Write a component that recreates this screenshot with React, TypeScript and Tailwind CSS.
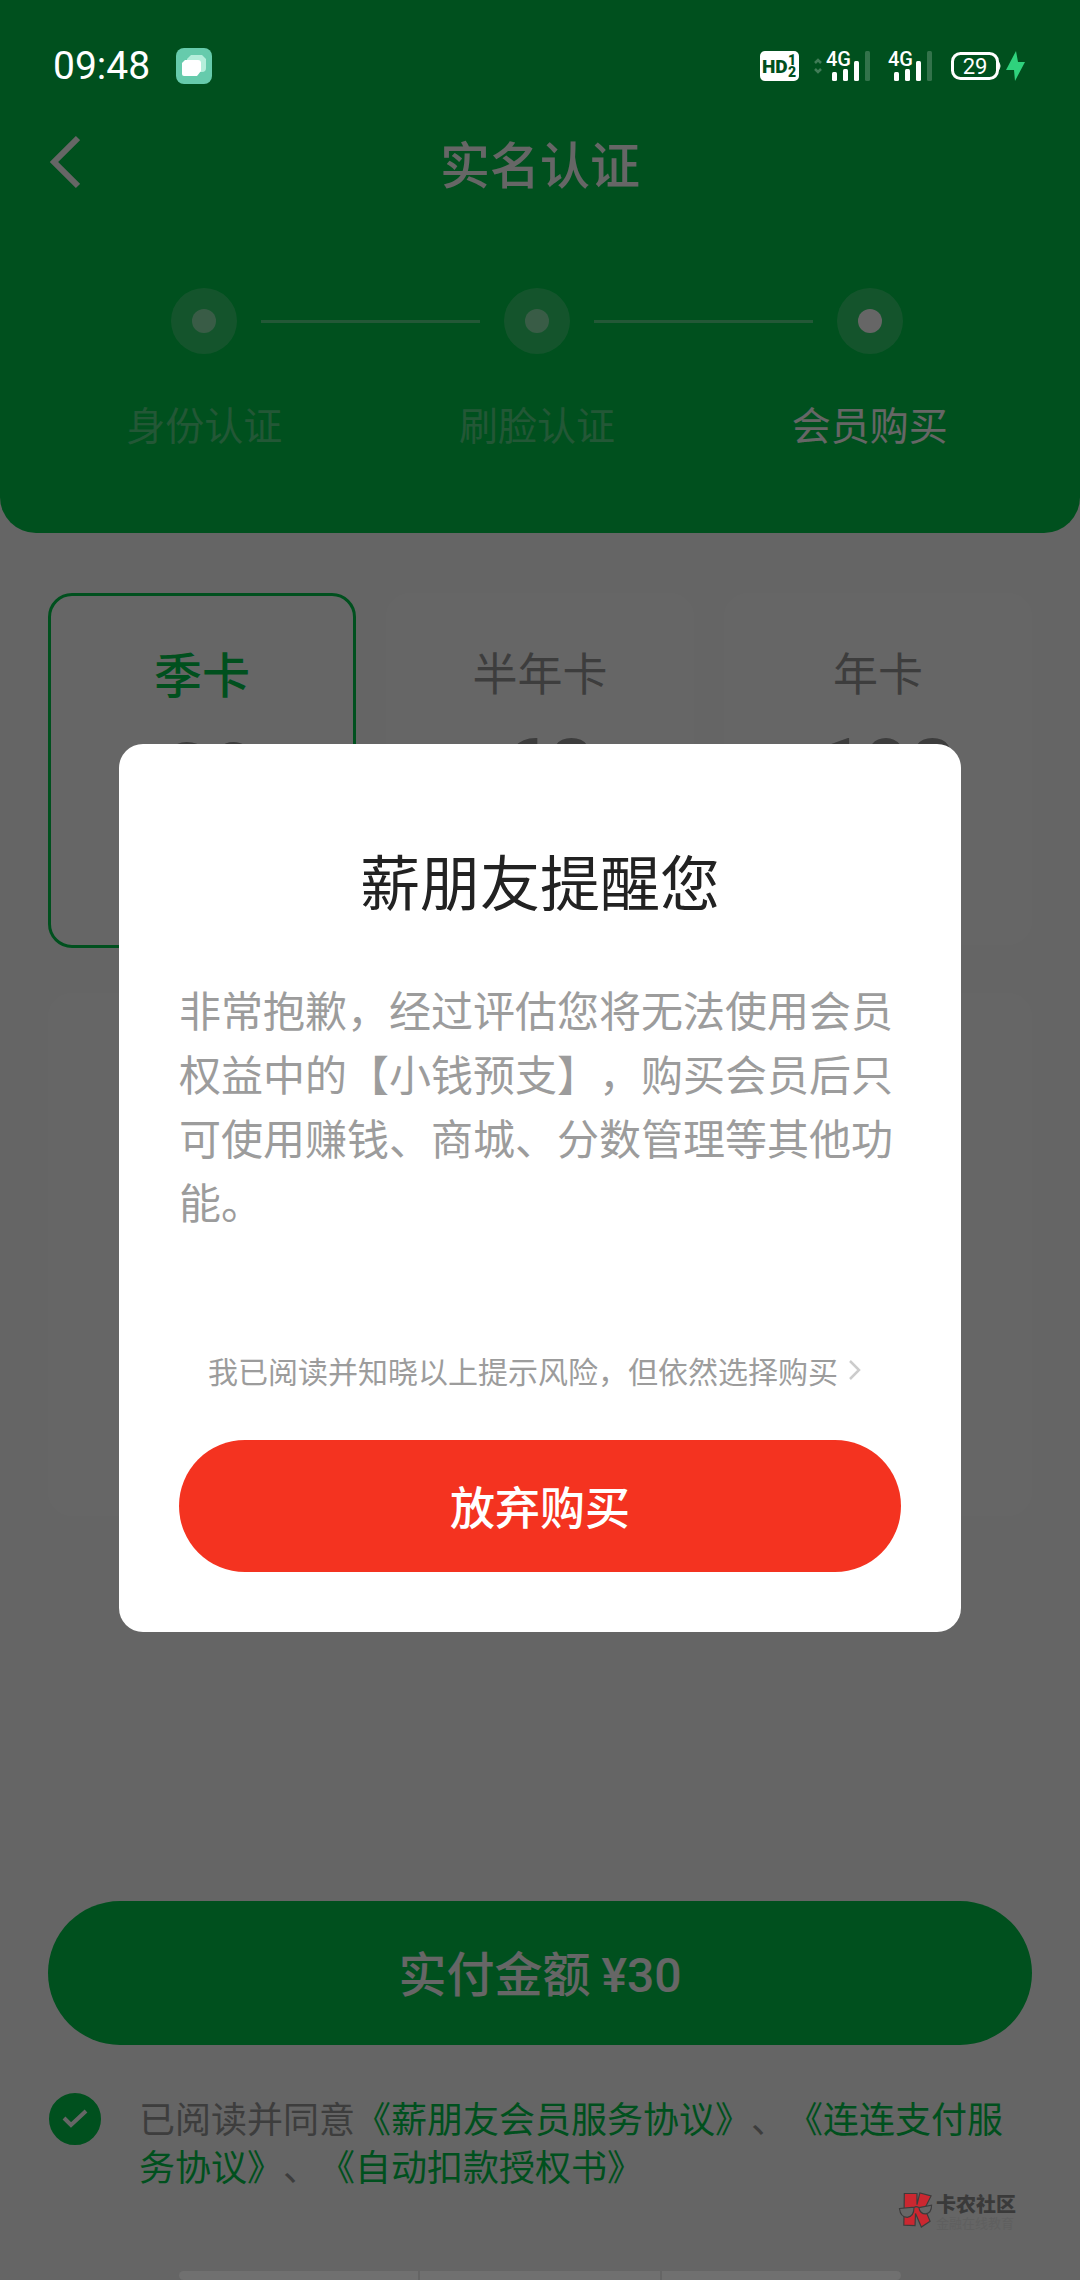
import { useState } from "react"

const steps = [
    { label: "身份认证", active: false },
    { label: "刷脸认证", active: false },
    { label: "会员购买", active: true },
]

const plans = [
    { id: "season", name: "季卡", price: 30 },
    { id: "half", name: "半年卡", price: 68 },
    { id: "year", name: "年卡", price: 198 },
]

function Signal() {
    return (
        <svg className="h-[30px] w-[46px] overflow-visible" viewBox="0 0 46 30" fill="#fff">
            <text x="0" y="15" fontSize="20" fontWeight="500" fontFamily="Roboto, sans-serif">4G</text>
            <rect x="6" y="21" width="5" height="9" rx="1.5" />
            <rect x="17" y="18" width="5" height="12" rx="1.5" />
            <rect x="28" y="10" width="5" height="20" rx="1.5" />
            <rect x="39" y="0" width="5" height="30" rx="1.5" opacity="0.2" />
        </svg>
    )
}

function StatusBar() {
    return (
        <div className="relative z-20 flex h-24 items-end justify-between pr-[54px] pl-[53px]">
            <div className="flex items-center gap-[26px] pb-2">
                <span className="font-[Roboto] text-[39px] leading-[44px] text-white">09:48</span>
                <svg className="h-9 w-9" viewBox="0 0 36 36">
                    <rect width="36" height="36" rx="8" fill="#66cbac" />
                    <path d="M15 7h11l4 4v9a4 4 0 0 1-4 4H11V11z" fill="#b5eedb" />
                    <path d="M9 12h13a3 3 0 0 1 3 3v8l-4 5H8a2 2 0 0 1-2-2V15z" fill="#fff" />
                </svg>
            </div>
            <div className="flex items-center pb-[15px]">
                <svg className="h-[30px] w-10" viewBox="0 0 40 30" fontFamily="Roboto, sans-serif" fontWeight="900" fill="#00501e">
                    <rect width="39" height="30" rx="5" fill="#fff" />
                    <text x="2" y="22" fontSize="19">HD</text>
                    <text x="28" y="14" fontSize="14">1</text>
                    <text x="28" y="26" fontSize="14">2</text>
                </svg>
                <svg className="ml-[14px] h-4 w-2" viewBox="0 0 8 16" fill="none" stroke="#fff" strokeWidth="2.500" opacity="0.25">
                    <path d="M1 5l3-3 3 3M1 11l3 3 3-3" />
                </svg>
                <div className="ml-1">
                    <Signal />
                </div>
                <div className="ml-4">
                    <Signal />
                </div>
                <svg className="ml-4 h-[30px] w-[76px]" viewBox="0 0 76 30">
                    <rect x="2.500" y="2.500" width="45" height="25" rx="8" fill="none" stroke="#fff" strokeWidth="3" />
                    <path d="M48 10q4 5 0 10z" fill="#fff" stroke="#fff" />
                    <text x="25" y="23" textAnchor="middle" fontSize="22" fontFamily="Roboto, sans-serif" fill="#fff">29</text>
                    <path d="M66 0L56 19h8l1 11 10-19h-7z" fill="#2fd27d" />
                </svg>
            </div>
        </div>
    )
}

function Header() {
    return (
        <header className="rounded-b-[36px] bg-[#00c84b] pb-[78px]">
            <StatusBar />
            <div className="grid h-[132px] grid-cols-3 items-center px-12">
                <button type="button" aria-label="返回" className="w-10">
                    <svg className="h-14 w-8" viewBox="0 0 32 56" fill="none" stroke="#fff" strokeWidth="6">
                        <path d="M30 4L6 28l24 24" />
                    </svg>
                </button>
                <h1 className="text-center text-[50px] font-medium text-white">实名认证</h1>
            </div>
            <div className="flex items-center gap-6 pt-[60px] pr-[177px] pl-[171px]">
                {steps.map((step, i) => (
                    <div key={step.label} className={i > 0 ? "flex flex-1 items-center gap-6" : "flex items-center"}>
                        {i > 0 && <div className="h-[3px] flex-1 bg-white/35" />}
                        <div className="flex h-[66px] w-[66px] items-center justify-center rounded-full bg-white/20">
                            <div className={step.active ? "h-6 w-6 rounded-full bg-white" : "h-6 w-6 rounded-full bg-white/45"} />
                        </div>
                    </div>
                ))}
            </div>
            <div className="mt-[37px] grid grid-cols-3 pr-[44px] pl-[38px] text-center text-[39px] leading-[64px]">
                {steps.map((step) => (
                    <p key={step.label} className={step.active ? "text-white" : "text-white/35"}>{step.label}</p>
                ))}
            </div>
        </header>
    )
}

function Plans() {
    const [selected, setSelected] = useState("season")

    return (
        <div className="grid grid-cols-3 gap-[30px]">
            {plans.map((plan) => (
                <button
                    key={plan.id}
                    type="button"
                    onClick={() => setSelected(plan.id)}
                    className={
                        plan.id === selected
                            ? "flex min-h-[355px] flex-col items-center gap-7 rounded-3xl border-3 border-[#00c84b] bg-white pt-11"
                            : "flex min-h-[352px] flex-col items-center gap-6 self-start rounded-3xl border-3 border-white bg-white pt-11"
                    }
                >
                    <span className={plan.id === selected ? "text-[48px] leading-[64px] font-medium text-[#00c84b]" : "text-[45px] leading-[64px] text-[#999]"}>
                        {plan.name}
                    </span>
                    <span className="font-[Roboto] text-[80px] leading-[80px] font-bold text-[#999]">
                        <span className="text-[32px]">¥</span>
                        {plan.price}
                    </span>
                </button>
            ))}
        </div>
    )
}

function Agreement() {
    const [agreed, setAgreed] = useState(true)

    return (
        <div className="mt-12 flex items-start gap-[38px]">
            <label className="grid h-[52px] w-[53px] shrink-0 place-items-center">
                <input
                    type="checkbox"
                    aria-label="已阅读并同意"
                    checked={agreed}
                    onChange={(e) => setAgreed(e.target.checked)}
                    className="col-start-1 row-start-1 h-[52px] w-[52px] appearance-none rounded-full border-2 border-[#00c84b] checked:bg-[#00c84b]"
                />
                {agreed && (
                    <svg className="pointer-events-none col-start-1 row-start-1 h-6 w-7" viewBox="0 0 28 24" fill="none" stroke="#fff" strokeWidth="4">
                        <path d="M3 11l7 7L25 4" />
                    </svg>
                )}
            </label>
            <p className="text-[36px] leading-[48px] text-[#999] [text-spacing-trim:space-all]">
                已阅读并同意<a href="#member" className="text-[#00c84b]">《薪朋友会员服务协议》</a>、<a href="#lianlian" className="text-[#00c84b]">《连连支付服务协议》</a>、<a href="#deduct" className="text-[#00c84b]">《自动扣款授权书》</a>
            </p>
        </div>
    )
}

function RiskDialog() {
    return (
        <div className="absolute inset-0 z-10 flex items-center justify-center bg-black/60 px-[119px] pt-24">
            <div role="dialog" aria-labelledby="risk-title" className="w-full rounded-3xl bg-white px-[60px] pt-24 pb-[60px]">
                <h2 id="risk-title" className="text-center text-[60px] leading-[80px] text-[#222]">薪朋友提醒您</h2>
                <p className="mt-[57px] text-[42px] leading-[64px] text-[#9c9c9c] [text-spacing-trim:space-all]">
                    非常抱歉，经过评估您将无法使用会员权益中的【小钱预支】，购买会员后只可使用赚钱、商城、分数管理等其他功能。
                </p>
                <button type="button" className="mt-[113px] flex w-full items-center justify-center gap-2 text-[30px] leading-[48px] text-[#9c9c9c]">
                    我已阅读并知晓以上提示风险，但依然选择购买
                    <svg className="h-[26px] w-[26px]" viewBox="0 0 26 26" fill="none" stroke="#ccc" strokeWidth="2.500">
                        <path d="M4 4l9 9-9 9" />
                    </svg>
                </button>
                <button type="button" className="mt-[46px] h-[132px] w-full rounded-full bg-[#f43320] text-[45px] font-medium text-white">
                    放弃购买
                </button>
            </div>
        </div>
    )
}

function Watermark() {
    return (
        <div className="absolute right-16 bottom-[50px] z-20 flex items-start gap-[2px]">
            <svg className="h-9 w-9" viewBox="0 0 36 37" stroke="#3c3c3c" strokeWidth="1.200">
                <path d="M6 1.500H19V13L22 1l11.500 3L27 17l5.500 13-9 6-6-14-.5 12.500L5.500 34z" fill="#cb2730" />
                <path d="M1 17l15-1.500q0 10-7 10.500-7 0-8-9zM21 16l13-2.500q0 8-6 9-6 0-7-6.500zM16 16q2-2 5 0" fill="#666" />
            </svg>
            <div>
                <p className="text-[20px] leading-[24px] font-black text-[#3a3a3a]">卡农社区</p>
                <p className="text-[13px] leading-[14px] text-[#5f5f5f]">金融在线教育</p>
            </div>
        </div>
    )
}

export default function App() {
    return (
        <div className="relative flex min-h-screen flex-col overflow-hidden bg-[#fcfcfc] font-['Noto_Sans_CJK_SC',sans-serif]">
            <Header />
            <main className="flex flex-1 flex-col px-12 pt-[60px] pb-[91px]">
                <Plans />
                <section className="mt-[45px] h-[523px] rounded-3xl bg-white" />
                <button type="button" className="mt-auto h-36 w-full rounded-full bg-[#00c84b] text-[48px] font-medium text-white">
                    实付金额 <span className="font-[Roboto]">¥30</span>
                </button>
                <Agreement />
            </main>
            <RiskDialog />
            <Watermark />
            {/* top edge of the system shortcut strip */}
            <div className="absolute inset-x-[179px] bottom-0 z-20 grid h-[9px] grid-cols-3 gap-[2px]">
                <div className="rounded-l-[5px] bg-[#707070]" />
                <div className="bg-[#707070]" />
                <div className="rounded-r-[5px] bg-[#707070]" />
            </div>
        </div>
    )
};
